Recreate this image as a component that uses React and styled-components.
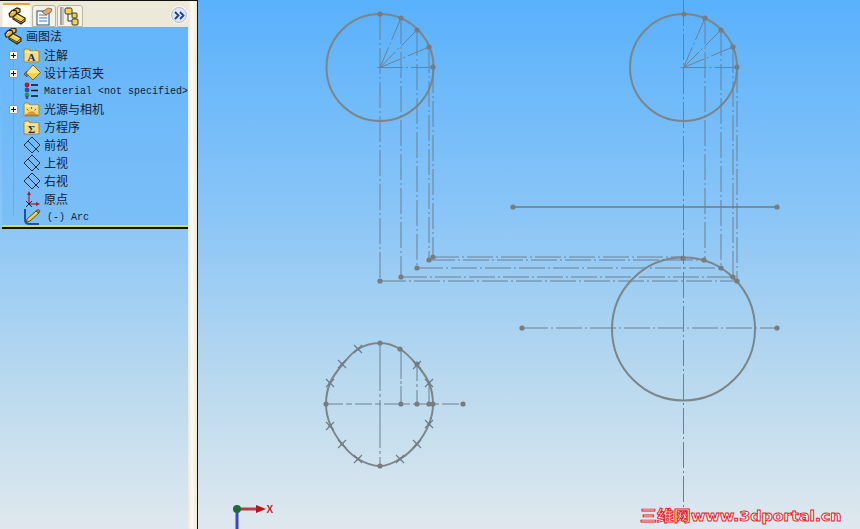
import React from "react";
import styled, { createGlobalStyle } from "styled-components";

const Global = createGlobalStyle`
  html, body { margin: 0; padding: 0; width: 860px; height: 529px; overflow: hidden; }
  #root { width: 860px; height: 529px; }
`;

const Page = styled.div`
  display: flex;
  width: 860px;
  height: 529px;
  overflow: hidden;
  background: linear-gradient(180deg, #59b1fc 0%, #8cc6f6 42%, #b9d9ee 72%, #dfe8ee 100%);
  font-family: "Noto Sans CJK SC", "Liberation Sans", sans-serif;
`;

const Sidebar = styled.aside`
  display: flex;
  flex-direction: column;
  width: 188px;
  flex: none;
  border-top: 1px solid #111;
  box-sizing: border-box;
`;

const TabStrip = styled.div`
  display: flex;
  align-items: flex-end;
  gap: 1px;
  height: 26px;
  flex: none;
  padding-left: 2px;
  background: #ece9d8;
  position: relative;
`;

const Tab = styled.div`
  display: flex;
  align-items: center;
  justify-content: center;
  box-sizing: border-box;
  width: ${(p) => p.$w}px;
  height: ${(p) => (p.$active ? 24 : 22)}px;
  background: ${(p) => (p.$active ? "#fdfdf9" : "#f4f2e6")};
  border: 1px solid ${(p) => (p.$active ? "#f3f1e4" : "#b8b5a2")};
  border-bottom: ${(p) => (p.$active ? "none" : "1px solid #b8b5a2")};
  border-top: ${(p) => (p.$active ? "2px solid #e8a33a" : "1px solid #b8b5a2")};
  border-radius: 3px 3px 0 0;
`;

const Chevron = styled.div`
  position: absolute;
  right: 1px;
  top: 6px;
  width: 16px;
  height: 16px;
  border-radius: 50%;
  background: #dfe7f5;
  border: 1px solid #aebbd6;
  box-shadow: 0 0 0 1px #fbfaf2;
  box-sizing: border-box;
  display: flex;
  align-items: center;
  justify-content: center;
`;

const TreePanel = styled.div`
  margin-left: 2px;
  height: 202px;
  flex: none;
  box-sizing: border-box;
  overflow: hidden;
  border-top: 1px solid #9fa6a8;
  border-bottom: 2px solid #111;
  background: linear-gradient(180deg, #64b5fb 0%, #7cbff7 100%);
  position: relative;
  &::before {
    content: "";
    position: absolute;
    left: 11px;
    top: 20px;
    width: 1px;
    height: 168px;
    background: rgba(70, 125, 185, 0.28);
  }
  &::after {
    content: "";
    position: absolute;
    left: 0;
    right: 0;
    bottom: 0;
    height: 2px;
    background: #d6d86a;
  }
`;

const Row = styled.div`
  display: flex;
  align-items: center;
  height: 18px;
  white-space: nowrap;
  position: relative;
  padding-left: ${(p) => (p.$root ? 2 : 7)}px;
  margin-top: ${(p) => (p.$root ? -1 : p.$gap ? 1 : 0)}px;
`;

const Expander = styled.div`
  width: 9px;
  height: 9px;
  flex: none;
  box-sizing: border-box;
  border: 1px solid #8d9aa6;
  background: #f7f7f2;
  border-radius: 1px;
  margin-right: 5px;
  position: relative;
  visibility: ${(p) => (p.$show ? "visible" : "hidden")};
  &::before {
    content: "";
    position: absolute;
    left: 1px;
    top: 3px;
    width: 5px;
    height: 1px;
    background: #111;
  }
  &::after {
    content: "";
    position: absolute;
    left: 3px;
    top: 1px;
    width: 1px;
    height: 5px;
    background: #111;
  }
`;

const IconBox = styled.div`
  width: 18px;
  height: 18px;
  flex: none;
  margin-right: ${(p) => p.$mr ?? 3}px;
  svg { display: block; }
`;

const Label = styled.span`
  font-size: 12px;
  color: #10223a;
  line-height: 18px;
`;

const MonoLabel = styled.span`
  font-family: "Liberation Mono", "DejaVu Sans Mono", monospace;
  font-size: 10px;
  color: #10223a;
  line-height: 18px;
  margin-top: 1px;
`;

const Splitter = styled.div`
  width: 9px;
  flex: none;
  background: linear-gradient(90deg, #ece9d8 0%, #fbfaf2 45%, #ece9d8 100%);
  border-right: 1px solid #111;
  border-top: 1px solid #111;
`;

const Canvas = styled.main`
  flex: 1;
  position: relative;
  overflow: hidden;
  svg { display: block; }
`;

const Watermark = styled.div`
  position: absolute;
  left: 442px;
  top: 506px;
  font-family: "DejaVu Sans", "Noto Sans CJK SC", sans-serif;
  font-weight: 700;
  font-size: 14px;
  line-height: 18px;
  white-space: nowrap;
  color: #fff;
  -webkit-text-stroke: 0.9px #e0222a;
  transform: scaleX(1.125);
  transform-origin: left center;
`;

const WatermarkCjk = styled.span`
  font-family: "Noto Sans CJK SC", sans-serif;
  font-size: 15px;
`;

const AxisLabel = styled.text`
  font-family: "Liberation Sans", sans-serif;
  font-size: 10px;
  font-weight: 700;
  fill: #c2232b;
`;

const PartIcon = () => (
  <svg width="18" height="18" viewBox="0 0 18 18">
    <path d="M5 3 L9 1 L12 2 L12 5 L9 6.500 L5 5 Z" fill="#e4b93c" stroke="#2a2410" strokeWidth="1.200" />
    <path d="M1 7 L4 3.500 L8 3.500 L9 6.500 L5 10 L2 10 Z" fill="#e4b93c" stroke="#2a2410" strokeWidth="1.200" />
    <path d="M5 10 L9 6.500 L17 11 L17 14 L13 17 L5 12 Z" fill="#efca4a" stroke="#2a2410" strokeWidth="1.200" />
    <path d="M5.500 11 L13 15 L13 17 M13 15 L17 11.500" fill="none" stroke="#2a2410" strokeWidth="0.900" />
    <path d="M9 8.500 L14 11.500 M3 6 L5 5" fill="none" stroke="#fff2b8" strokeWidth="1" />
  </svg>
);

const Folder = ({ children }) => (
  <svg width="18" height="18" viewBox="0 0 18 18">
    <path d="M1 4 L1 16 L16 16 L16 5 L7 5 L6 3 L2 3 Z" fill="#f8dc7c" stroke="#a08a3c" />
    <path d="M2 6 L15 6" stroke="#fff6c8" />
    {children}
  </svg>
);

const SmallGlyph = styled.text`
  font-family: "Liberation Serif", serif;
  font-size: 11px;
  font-weight: 700;
  fill: #17305c;
  text-anchor: middle;
`;

const TagIcon = () => (
  <svg width="18" height="18" viewBox="0 0 18 18">
    <path d="M1 10 L4 7 L4 13 Z" fill="#9a8a5a" stroke="#555" />
    <path d="M10 1 L17.500 8.500 L10 16 L3 9 Z" fill="#f6d043" stroke="#7a6a30" />
    <path d="M10 2 L16.500 8.500 L10 9.500 L4 8.500 Z" fill="#fbe88a" />
  </svg>
);

const MaterialIcon = () => (
  <svg width="18" height="18" viewBox="0 0 18 18">
    <circle cx="4" cy="3" r="2.400" fill="#b0202a" />
    <circle cx="4" cy="8" r="2.400" fill="#2a4ec0" />
    <circle cx="4" cy="13" r="2.400" fill="#2a9a3a" />
    <path d="M4 14 L4 17" stroke="#2a4ec0" strokeWidth="2.400" />
    <path d="M8 3 H15 M8 8.500 H15 M8 14 H15" stroke="#111" strokeWidth="1.500" />
  </svg>
);

const LightIcon = () => (
  <Folder>
    <path d="M4 14 A5 5 0 0 1 13 14 Z" fill="#e8931f" />
    <path d="M8.500 7 V9 M4 9 L5.500 10.500 M13 9 L11.500 10.500" stroke="#a85a12" />
    <path d="M2 15 H15" stroke="#8a4a12" />
  </Folder>
);

const PlaneIcon = () => (
  <svg width="18" height="18" viewBox="0 0 18 18">
    <path d="M1 9 L9 1 L17 9 L9 17 Z" fill="none" stroke="#1a2a3a" />
    <path d="M5 5 L13 13 M11 15 L16 10 M13 13 L16 16" fill="none" stroke="#1a2a3a" />
  </svg>
);

const OriginIcon = () => (
  <svg width="18" height="18" viewBox="0 0 18 18">
    <path d="M6 14 V3" stroke="#a51d3c" strokeWidth="1.200" />
    <path d="M6 1 L4 5 H8 Z" fill="#a51d3c" />
    <path d="M6 14 H14" stroke="#a51d3c" strokeWidth="1.200" />
    <path d="M17 14 L13 12 V16 Z" fill="#a51d3c" />
    <path d="M3 11 L9 17 M9 11 L3 17" stroke="#222" />
  </svg>
);

const SketchIcon = () => (
  <svg width="18" height="18" viewBox="0 0 18 18">
    <path d="M2 1 V12 Q2 16 7 16 H16" fill="none" stroke="#1f4fa8" strokeWidth="2" />
    <path d="M4 11 L13 3 L16 5 L7 13 L3.500 14 Z" fill="#efcf3e" stroke="#333" strokeWidth="0.800" />
    <path d="M13 3 L16 5 L17 2.500 L15 1.500 Z" fill="#b97a6a" stroke="#333" strokeWidth="0.600" />
  </svg>
);

const TabClipboard = () => (
  <svg width="20" height="20" viewBox="0 0 20 20">
    <rect x="3" y="5" width="12" height="14" fill="#fff" stroke="#1e4e8a" />
    <path d="M5 9 H13 M5 12 H13 M5 15 H13" stroke="#2e78c8" />
    <path d="M8 6 L14 2 L18 3 L17 6 L12 9 Z" fill="#e0a878" stroke="#7a5030" strokeWidth="0.700" />
  </svg>
);

const TabConfig = () => (
  <svg width="20" height="20" viewBox="0 0 20 20">
    <path d="M1 1 V19" stroke="#555" />
    <path d="M3 1 V19" stroke="#999" />
    <path d="M8 7 V15 H12" fill="none" stroke="#333" />
    <rect x="5" y="2" width="7" height="6" rx="1.500" fill="#f2d250" stroke="#333" />
    <rect x="12" y="7" width="5" height="5" rx="1" fill="#f2d250" stroke="#333" />
    <rect x="12" y="13" width="6" height="6" rx="1" fill="#f2d250" stroke="#333" />
  </svg>
);

const CHEVRON = (
  <svg width="11" height="9" viewBox="0 0 11 9">
    <path d="M1 1 L4.500 4.500 L1 8 M6 1 L9.500 4.500 L6 8" fill="none" stroke="#1f3f8f" strokeWidth="1.800" />
  </svg>
);

const tree = [
  { icon: <Folder><SmallGlyph x="8.500" y="15">A</SmallGlyph></Folder>, text: "注解", plus: true, gap: true },
  { icon: <TagIcon />, text: "设计活页夹", plus: true },
  { icon: <MaterialIcon />, mono: "Material <not specified>" },
  { icon: <LightIcon />, text: "光源与相机", plus: true },
  { icon: <Folder><SmallGlyph x="8.500" y="15">Σ</SmallGlyph></Folder>, text: "方程序" },
  { icon: <PlaneIcon />, text: "前视" },
  { icon: <PlaneIcon />, text: "上视" },
  { icon: <PlaneIcon />, text: "右视" },
  { icon: <OriginIcon />, text: "原点" },
  { icon: <SketchIcon />, mono: "(-) Arc", mr: 6 },
];

const Curve = styled.path`
  fill: none;
  stroke: #7d8588;
  stroke-width: 2;
`;
const Ring = styled.circle`
  fill: none;
  stroke: #7d8588;
  stroke-width: 2;
`;
const Center = styled.path`
  fill: none;
  stroke: #6d8092;
  stroke-width: 1;
  stroke-dasharray: ${(p) => p.$dash || "26 3 2 3"};
`;
const Solid = styled.path`
  fill: none;
  stroke: #6d7b86;
  stroke-width: ${(p) => p.$w || 1};
`;
const Dot = styled.circle`
  fill: #767c80;
`;

const px = [380, 401, 417, 429, 433];
const py = [14, 18, 30, 47, 67];
const offX = 304;
const ends = [281, 277, 268, 260, 257];

const CircleProjection = ({ dx, cx }) => (
  <g>
    <Ring cx={cx} cy={67.5} r={53.5} />
    {px.slice(1, 4).map((x, i) => (
      <Center key={x} d={`M${cx} 67.5 L${x + dx} ${py[i + 1]}`} $dash="22 3 2 3" />
    ))}
    <Center d={`M${cx - 3} 67.5 H${437 + dx - 4}`} $dash="26 3 2 3" />
    {px.map((x, i) => <Dot key={x} cx={x + dx} cy={py[i]} r={2.6} />)}
  </g>
);

const ellipsePts = [[380,343],[400,349],[417,365],[429,383],[433,404],[429,424],[417,444],[400,459],[380,466],[358,459],[342,444],[330,424],[326,404],[330,383],[342,365],[358,349]];
const crosses = [[358,349],[342,364],[330,383],[330,426],[342,444],[358,459],[400,459],[417,444],[429,424],[429,383],[417,365]];
const ellipseDots = [[380,343],[400,349],[417,364],[326,404],[401,404],[417,404],[429,404],[433,404],[463,404],[380,466]];

const smoothClosed = (pts) => {
  const n = pts.length;
  let d = `M${pts[0][0]} ${pts[0][1]}`;
  for (let i = 0; i < n; i++) {
    const p0 = pts[(i - 1 + n) % n];
    const p1 = pts[i];
    const p2 = pts[(i + 1) % n];
    const p3 = pts[(i + 2) % n];
    const c1x = p1[0] + (p2[0] - p0[0]) / 6;
    const c1y = p1[1] + (p2[1] - p0[1]) / 6;
    const c2x = p2[0] - (p3[0] - p1[0]) / 6;
    const c2y = p2[1] - (p3[1] - p1[1]) / 6;
    d += ` C${c1x} ${c1y} ${c2x} ${c2y} ${p2[0]} ${p2[1]}`;
  }
  return d;
};

const Drawing = () => (
  <svg width="662" height="529" viewBox="198 0 662 529">
    <Center d="M683.500 0 V520" />
    <Center d="M380 14 V281" />
    <CircleProjection dx={0} cx={380} />
    <CircleProjection dx={offX} cx={683.500} />
    {px.slice(1).map((x, i) => (
      <React.Fragment key={x}>
        <Center d={`M${x} ${py[i + 1]} V${ends[i + 1]}`} />
        <Center d={`M${x + offX} ${py[i + 1]} V${[258, 260, 268, 277, 281][i + 1]}`} />
      </React.Fragment>
    ))}
    {px.map((x, i) => (
      <Center key={x} d={`M${x} ${ends[i]} H${[737, 733, 721, 704, 683][i]}`} />
    ))}
    {px.map((x, i) => <Dot key={x} cx={x} cy={ends[i]} r={2.6} />)}

    <Solid d="M513 207 H777" $w={1.500} />
    <Dot cx={513} cy={207} r={2.600} />
    <Dot cx={777} cy={207} r={2.600} />

    <Ring cx={683.500} cy={329} r={71.500} />
    {[[683,258],[704,260],[721,268],[733,277],[737,281]].map(([x, y]) => <Dot key={x} cx={x} cy={y} r={2.600} />)}
    <Center d="M522 328 H777" />
    <Dot cx={522} cy={328} r={2.600} />
    <Dot cx={777} cy={328} r={2.600} />

    <Curve d={smoothClosed(ellipsePts)} />
    <Center d="M326 404 H463" $dash="17 3 6 3" />
    <Center d="M380 343 V466" $dash="48 3 3 3" />
    <Center d="M401 349 V404" $dash="30 2 3 2" />
    <Center d="M417 365 V404" $dash="16 3 3 3" />
    <Center d="M429 383 V404" $dash="30 2" />
    {crosses.map(([x, y]) => (
      <g key={`${x}-${y}`}>
        <Solid d={`M${x - 4} ${y - 4} L${x + 4} ${y + 4} M${x + 4} ${y - 4} L${x - 4} ${y + 4}`} $w={1.100} />
        <Dot cx={x} cy={y} r={1.600} />
      </g>
    ))}
    {ellipseDots.map(([x, y]) => <Dot key={`${x}-${y}`} cx={x} cy={y} r={2.600} />)}

    <path d="M237 510 V529" stroke="#3a48b8" strokeWidth="3" />
    <path d="M238 509 H256" stroke="#b83a44" strokeWidth="3" />
    <path d="M266 509 L256 505 V513 Z" fill="#b3141e" />
    <circle cx="237" cy="509" r="4" fill="#1f6b35" />
    <AxisLabel x="266.500" y="513">X</AxisLabel>
  </svg>
);

export default function App() {
  return (
    <Page>
      <Global />
      <Sidebar>
        <TabStrip>
          <Tab $w={29} $active><IconBox $mr={0}><PartIcon /></IconBox></Tab>
          <Tab $w={24}><TabClipboard /></Tab>
          <Tab $w={26}><TabConfig /></Tab>
          <Chevron>{CHEVRON}</Chevron>
        </TabStrip>
        <TreePanel>
          <Row $root>
            <IconBox $mr={4}><PartIcon /></IconBox>
            <Label>画图法</Label>
          </Row>
          {tree.map((item, i) => (
            <Row key={i} $gap={item.gap}>
              <Expander $show={item.plus} />
              <IconBox $mr={item.mr}>{item.icon}</IconBox>
              {item.mono ? <MonoLabel>{item.mono}</MonoLabel> : <Label>{item.text}</Label>}
            </Row>
          ))}
        </TreePanel>
      </Sidebar>
      <Splitter />
      <Canvas>
        <Drawing />
        <Watermark><WatermarkCjk>三维网</WatermarkCjk>www.3dportal.cn</Watermark>
      </Canvas>
    </Page>
  );
}
